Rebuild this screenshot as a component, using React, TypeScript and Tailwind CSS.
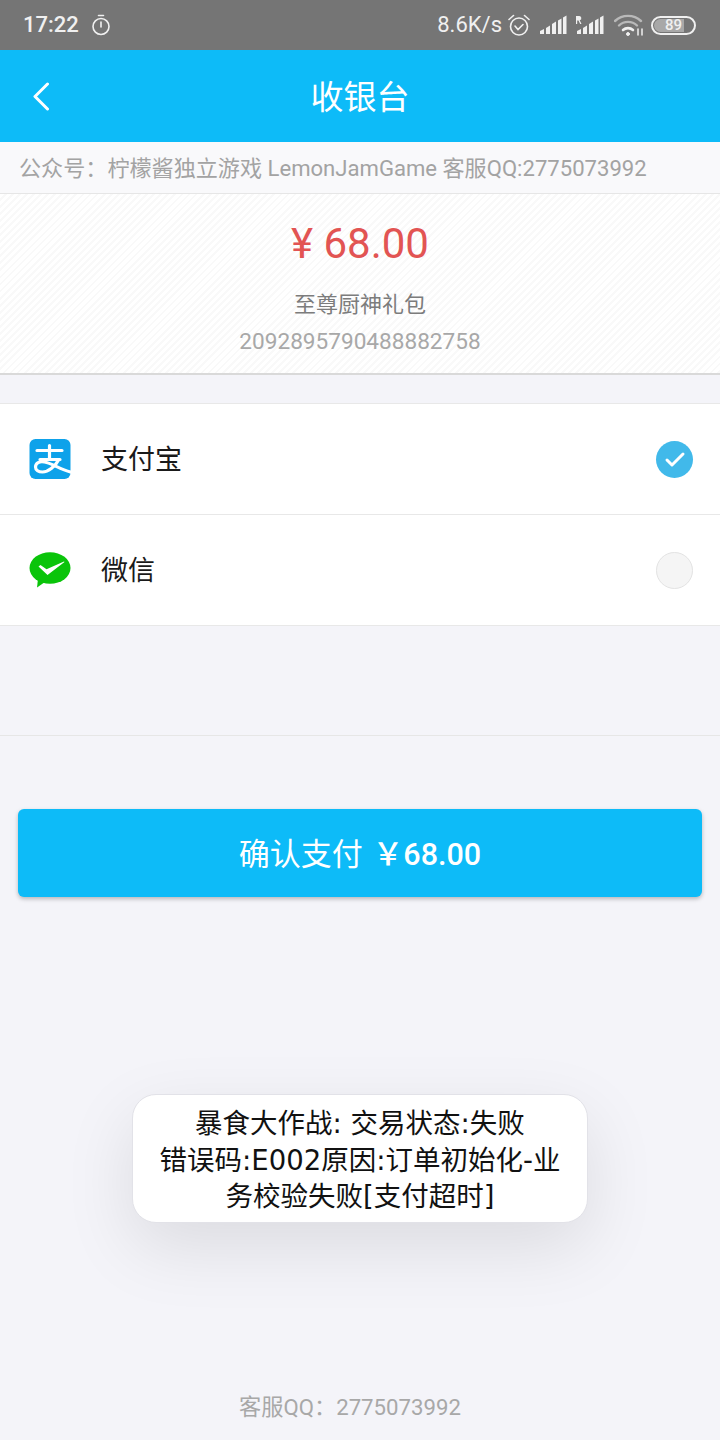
import React from 'react';

const sans = { fontFamily: 'Roboto, "Noto Sans CJK SC", sans-serif' };
const toastFont = { fontFamily: '"DejaVu Sans", "Noto Sans CJK SC", sans-serif' };

const SignalBars = () => (
  <g fill="#f0f0f0">
    <path d="M0 19v-3l4-2v5z" />
    <path d="M6 19v-6l4-2.500v8.500z" />
    <path d="M12 19V9l4-2.500V19z" />
    <path d="M18 19V5.500l3.500-2V19z" />
    <path d="M23 19V2.500l3.500-2V19z" />
  </g>
);

const StatusBar = () => (
  <div className="h-[50px] bg-[#757575] flex items-center text-[#f0f0f0] shrink-0">
    <span className="ml-[23px] text-[22px] font-medium leading-none">17:22</span>
    <svg className="ml-[12px]" width="20" height="22" viewBox="0 0 20 22" fill="none" stroke="#f0f0f0">
      <circle cx="10" cy="12.500" r="8" strokeWidth="1.600" />
      <path d="M7.500 1.500h5M10 8v5" strokeWidth="1.600" strokeLinecap="round" />
    </svg>
    <span className="ml-auto text-[22px] leading-none">8.6K/s</span>
    <svg className="ml-[5px]" width="24" height="24" viewBox="0 0 24 24" fill="none" stroke="#f0f0f0" strokeWidth="1.600">
      <circle cx="12" cy="13.500" r="8.500" />
      <path d="M8 13l3 3.500 5-5M2 6.500l4.500-4M22 6.500l-4.500-4" strokeLinecap="round" />
    </svg>
    <svg className="ml-[9px]" width="27" height="20" viewBox="0 0 27 20">
      <SignalBars />
    </svg>
    <svg className="ml-[9px]" width="28" height="20" viewBox="0 0 28 20" fill="#f0f0f0">
      <g transform="translate(1 0)"><SignalBars /></g>
      <path d="M0 9V1h2.800a2.200 2.200 0 0 1 .9 4.300L5.500 9H4.100L2.500 5.500H1.200V9z" />
    </svg>
    <svg className="ml-[10px]" width="30" height="24" viewBox="0 0 30 24" fill="none" stroke="#f0f0f0" strokeLinecap="round">
      <path d="M1 8a19 19 0 0 1 26 0" strokeWidth="2.400" opacity="0.55" />
      <path d="M5 12.500a13 13 0 0 1 18 0" strokeWidth="2.400" opacity="0.55" />
      <path d="M9 17a7.500 7.500 0 0 1 10 0" strokeWidth="2.600" />
      <circle cx="14" cy="21" r="1.500" fill="#f0f0f0" />
      <path d="M24 16v6M28 16v6" strokeWidth="1.500" />
    </svg>
    <div className="ml-[7px] mr-[24px] w-[45px] h-[19px] rounded-full border-2 border-[#f0f0f0] flex items-center p-[1px] relative">
      <div className="h-full w-[78%] rounded-l-full bg-[#a8a8a8]" />
      <span className="absolute inset-0 flex items-center justify-center text-[15px] font-medium leading-none">89</span>
    </div>
  </div>
);

const AlipayIcon = () => (
  <svg width="42" height="40" viewBox="0 0 42 40">
    <rect x="0.500" y="0" width="41" height="40" rx="6" fill="#0ea2ea" />
    <g fill="none" stroke="#fff" strokeWidth="3.200" strokeLinecap="round">
      <path d="M8 11.500h25M20.500 6.500v14M11 20.500h20" />
      <path d="M29.500 21c-3 6-10 12-16 12-4 0-7-2-7-5 0-4 4-6 9-5 7 1 15 7 26 10" />
    </g>
  </svg>
);

const WechatIcon = () => (
  <svg width="42" height="36" viewBox="0 0 42 36">
    <ellipse cx="21" cy="16" rx="20.500" ry="15.800" fill="#0ac40a" />
    <path d="M9 27l-1 8.500 8-5.500z" fill="#0ac40a" />
    <path d="M9.500 14.500l2-1.600 6 4.300L35 9.500l.5.600L18.500 23z" fill="#fff" />
  </svg>
);

const App = () => {
  return (
    <div className="relative w-[720px] h-[1440px] bg-[#f4f4f9] flex flex-col overflow-hidden" style={sans}>
      <StatusBar />

      <div className="relative h-[92px] bg-[#0dbbf8] flex items-center justify-center shrink-0">
        <svg className="absolute left-[32px] top-[32px]" width="20" height="29" viewBox="0 0 20 29" fill="none" stroke="#fff" strokeWidth="3" strokeLinecap="round" strokeLinejoin="round">
          <path d="M15.500 2L3 14.500 15.500 27" />
        </svg>
        <h1 className="text-white text-[33px] leading-none pt-[2px]">收银台</h1>
      </div>

      <div className="h-[52px] bg-[#f9f9fb] border-b border-[#e6e6e6] flex items-center pl-[19px] pt-[3px] text-[#a3a3a3] text-[22.100px] whitespace-nowrap shrink-0">
        公众号：柠檬酱独立游戏 LemonJamGame 客服QQ:2775073992
      </div>

      <div className="h-[181px] border-b-2 border-[#d9d9d9] flex flex-col items-center shrink-0 bg-[repeating-linear-gradient(135deg,#ffffff_0px,#ffffff_3px,#f9f9f9_3px,#f9f9f9_5px)]">
        <div className="mt-[25px] text-[#e25453] text-[42px] leading-[50px]">¥ 68.00</div>
        <div className="mt-[22px] text-[#7c7c7c] text-[22px] leading-[28px]">至尊厨神礼包</div>
        <div className="mt-[9px] text-[#a8a8a8] text-[22.600px] leading-[28px]">2092895790488882758</div>
      </div>

      <div className="mt-[28px] bg-white border-y border-[#e8e8e8] shrink-0">
        <div className="h-[111px] flex items-center border-b border-[#e8e8e8] pl-[29px] pr-[27px]">
          <div className="w-[42px] flex justify-center"><AlipayIcon /></div>
          <span className="ml-[30px] pt-[3px] text-[27px] text-[#1a1a1a]">支付宝</span>
          <div className="ml-auto w-[37px] h-[37px] rounded-full bg-[#41b9ea] flex items-center justify-center">
            <svg width="22" height="18" viewBox="0 0 22 18" fill="none" stroke="#fff" strokeWidth="3" strokeLinecap="round" strokeLinejoin="round">
              <path d="M3 10l5 5L19 4" />
            </svg>
          </div>
        </div>
        <div className="h-[110px] flex items-center pl-[29px] pr-[27px]">
          <div className="w-[42px] flex justify-center"><WechatIcon /></div>
          <span className="ml-[30px] pt-[3px] text-[27px] text-[#1a1a1a]">微信</span>
          <div className="ml-auto w-[37px] h-[37px] rounded-full bg-[#f5f5f5] border border-[#e3e3e3]" />
        </div>
      </div>

      <div className="h-[110px] border-b border-[#e6e6e6] shrink-0" />

      <button className="mt-[73px] mx-[18px] h-[88px] bg-[#0dbbf8] rounded-[6px] shadow-[0_2px_4px_rgba(0,0,0,0.25)] text-white flex items-center justify-center pt-[4px] shrink-0">
        <span className="text-[31px]">确认支付</span>
        <span className="ml-[10px] text-[30.500px] font-medium">￥68.00</span>
      </button>

      <div className="mt-auto mb-[19px] pr-[20px] text-center text-[#a8a8a8] text-[22.200px] leading-[28px]">客服QQ：2775073992</div>

      <div className="absolute left-[132px] top-[1094px] w-[456px] h-[129px] bg-white rounded-[24px] border border-[#e2e2e8] shadow-[0_24px_70px_rgba(0,0,0,0.1)] flex items-center justify-center text-center text-[#111] text-[27.500px] leading-[36.500px] pt-[3px] px-[10px] whitespace-nowrap" style={toastFont}>
        <div>
          暴食大作战: 交易状态:失败
          <br />
          错误码:E002原因:订单初始化-业
          <br />
          务校验失败[支付超时]
        </div>
      </div>
    </div>
  );
};

export default App;
